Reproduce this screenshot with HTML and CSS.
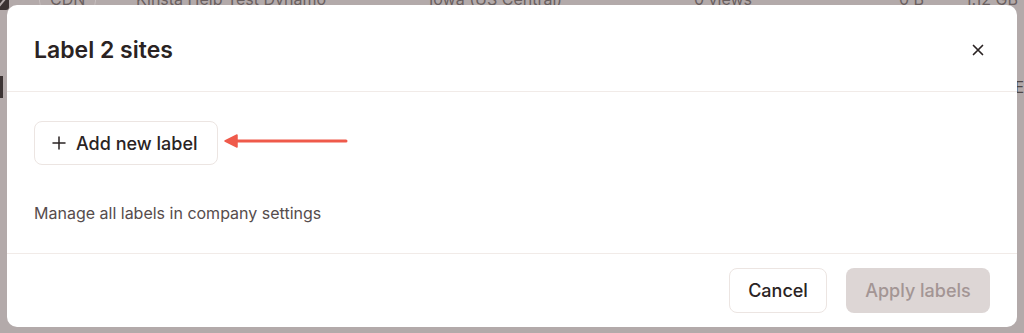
FILE: index.html
```html
<!DOCTYPE html>
<html>
<head>
<meta charset="utf-8">
<link rel="stylesheet" href="styles.css">
</head>
<body>
<div class="page">
  <div class="row row-top">
    <span class="chk">
      <svg width="14" height="14" viewBox="0 0 14 14"><path d="M3 7 L6 10 L11 4" stroke="#b3aaaa" stroke-width="2" fill="none"/></svg>
    </span>
    <span class="cell c1"><span class="pill">CDN</span></span>
    <span class="cell c2">Kinsta Help Test Dynamo</span>
    <span class="cell c3">Iowa (US Central)</span>
    <span class="cell c4">0 views</span>
    <span class="cell c5">0 B</span>
    <span class="cell c6">1.12 GB</span>
  </div>
  <div class="row row-second">
    <span class="chk2"></span>
    <span class="cell c6b">E</span>
  </div>
</div>
<div class="modal">
  <div class="modal-header">
    <h2 class="title">Label 2 sites</h2>
    <button class="close" aria-label="Close">
      <svg width="12" height="12" viewBox="0 0 12 12"><path d="M1.5 1.5 L10.5 10.5 M10.5 1.5 L1.5 10.5" stroke="#2a2323" stroke-width="1.7" stroke-linecap="round"/></svg>
    </button>
  </div>
  <div class="modal-body">
    <div class="add-row">
      <button class="btn btn-add">
        <svg width="14" height="14" viewBox="0 0 14 14"><path d="M7 1 V13 M1 7 H13" stroke="#2a2323" stroke-width="1.5" stroke-linecap="round"/></svg>
        <span>Add new label</span>
      </button>
      <svg class="arrow" width="126" height="16" viewBox="0 0 126 16"><path d="M10 8 H122" stroke="#ef5a4b" stroke-width="3" stroke-linecap="round"/><path d="M1 8 L13 2 L13 14 Z" fill="#ef5a4b" stroke="#ef5a4b" stroke-width="1.5" stroke-linejoin="round"/></svg>
    </div>
    <p class="manage">Manage all labels in company settings</p>
  </div>
  <div class="modal-footer">
    <button class="btn btn-cancel">Cancel</button>
    <button class="btn btn-apply" disabled>Apply labels</button>
  </div>
</div>
</body>
</html>
```

FILE: styles.css
```css
* { box-sizing: border-box; }
html, body { margin: 0; padding: 0; }
body {
  width: 1024px;
  height: 333px;
  overflow: hidden;
  background: #b3aaaa;
  font-family: Inter, "Noto Sans", sans-serif;
  position: relative;
}
.page { color: #6a6060; }
.row {
  display: flex;
  align-items: center;
  font-size: 16px;
  height: 22px;
  white-space: nowrap;
}
.row-top { margin-top: -12px; }
.chk {
  width: 16px; height: 16px; background: #3b3333; border-radius: 3px;
  margin-left: -7px; margin-top: 6px;
  display: flex; align-items: center; justify-content: center;
}
.cell { display: block; }
.pill {
  border: 1px solid #c6bebe;
  border-radius: 10px;
  padding: 1px 10px;
}
.c1 { margin-left: 30px; width: 97px; }
.c2 { width: 293px; }
.c3 { width: 265px; }
.c4 { width: 205px; }
.c5 { width: 66px; }
.row-second { margin-top: 66px; height: 22px; }
.chk2 { width: 7px; height: 22px; background: #3b3333; }
.c6b { margin-left: 1011px; font-size: 16px; color: #4f4646; }

.modal {
  position: absolute;
  left: 7px;
  top: 5px;
  width: 1010px;
  background: #fff;
  border-radius: 10px;
  display: flex;
  flex-direction: column;
}
.modal-header {
  display: flex;
  align-items: center;
  justify-content: space-between;
  padding: 31px 27px 27px 27px;
  border-bottom: 1px solid #f1ebe8;
}
.title {
  margin: 0;
  font-size: 23px;
  line-height: 28px;
  font-weight: 600;
  color: #2a2323;
}
.close {
  border: 0;
  background: none;
  padding: 0;
  width: 12px;
  height: 12px;
  margin-right: 6px;
  display: flex;
  cursor: pointer;
}
.modal-body {
  padding: 29px 27px 30px 27px;
  border-bottom: 1px solid #f1ebe8;
}
.add-row {
  display: flex;
  align-items: center;
  gap: 6px;
}
.btn {
  font-family: Inter, "Noto Sans", sans-serif;
  font-weight: 500;
  border-radius: 8px;
  cursor: pointer;
}
.btn-add {
  display: flex;
  align-items: center;
  gap: 10px;
  height: 44px;
  width: 184px;
  padding: 0 0 0 17px;
  background: #fff;
  border: 1px solid #ece5e2;
  font-size: 18px;
  color: #2a2323;
}
.arrow { display: block; margin-top: -4px; }
.manage {
  margin: 38px 0 0 0;
  font-size: 16px;
  line-height: 20px;
  color: #564c4c;
}
.modal-footer {
  display: flex;
  justify-content: flex-end;
  gap: 19px;
  padding: 14px 27px 14px 27px;
}
.btn-cancel {
  height: 45px;
  width: 98px;
  padding: 0;
  background: #fff;
  border: 1px solid #ece5e2;
  font-size: 18px;
  color: #2a2323;
}
.btn-apply {
  height: 45px;
  width: 144px;
  padding: 0;
  background: #ddd6d5;
  border: 0;
  font-size: 18px;
  color: #a39594;
}
```
